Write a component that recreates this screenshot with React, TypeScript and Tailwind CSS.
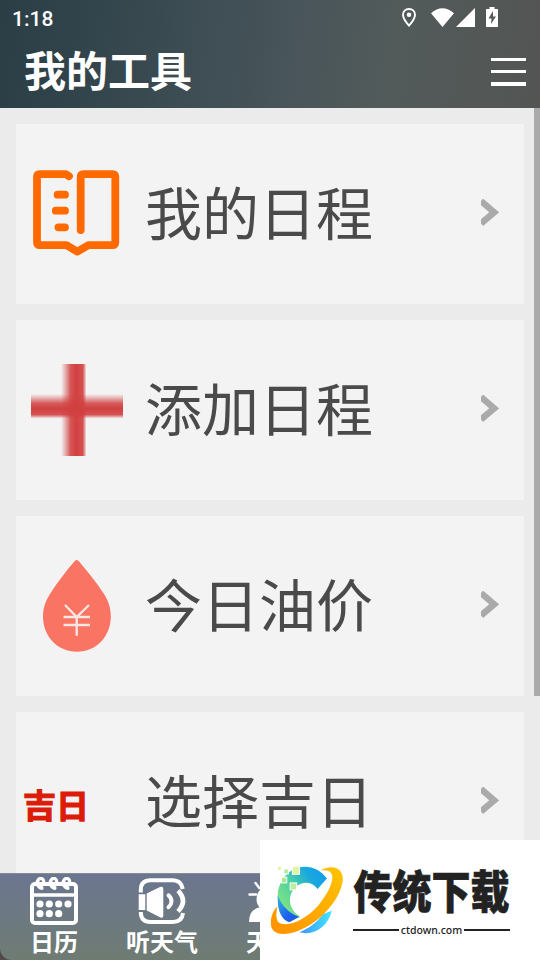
import React from 'react';

const BookIcon = () => (
    <svg viewBox="0 0 92 92" className="size-[92px]" fill="none" stroke="#ff6a00" strokeWidth="7.8" strokeLinecap="round" strokeLinejoin="round">
        <path d="M38 8.200 L35 6.200 H8.500 Q6 6.200 6 9 V74 Q6 77.200 9 77.200 H35.500 L46.300 83.600 L57.500 77.200 H81.500 Q84.300 77.200 84.300 74 V9 Q84.300 6.200 81.500 6.200 H52.500 Q49.700 6.200 49.700 9 V62" />
        <path d="M26.600 26.700 H34 M24.800 42.700 H34 M27.400 59.300 H34" />
    </svg>
);

const PlusIcon = () => (
    <svg viewBox="0 0 92 92" className="size-[92px]">
        <defs>
            <linearGradient id="plusV">
                <stop offset="0" stopColor="#d14040" stopOpacity="0" />
                <stop offset=".2" stopColor="#d14040" stopOpacity=".45" />
                <stop offset=".38" stopColor="#d14040" stopOpacity=".88" />
                <stop offset=".6" stopColor="#d14040" />
                <stop offset=".86" stopColor="#d14040" stopOpacity=".9" />
                <stop offset="1" stopColor="#d14040" stopOpacity="0" />
            </linearGradient>
            <linearGradient id="plusH" x2="0" y2="1">
                <stop offset="0" stopColor="#d14040" stopOpacity="0" />
                <stop offset=".2" stopColor="#d14040" stopOpacity=".45" />
                <stop offset=".38" stopColor="#d14040" stopOpacity=".85" />
                <stop offset=".6" stopColor="#d14040" />
                <stop offset=".84" stopColor="#d14040" stopOpacity=".9" />
                <stop offset="1" stopColor="#d14040" stopOpacity="0" />
            </linearGradient>
        </defs>
        <rect x="30" y="0" width="25.500" height="92" fill="url(#plusV)" />
        <rect x="0" y="30" width="92" height="24.500" fill="url(#plusH)" />
    </svg>
);

const OilIcon = () => (
    <svg viewBox="0 0 92 92" className="size-[92px]">
        <path d="M43.800 1 Q45.700 -.8 47.600 1 C57 12 66 23 73 34 C77.500 41 79.800 48 79.800 56.500 C79.800 76.500 65 91.800 46 91.800 C27 91.800 12 76.500 12 56.500 C12 48 14.500 41 19 34 C26 23 35 11 43.800 1 Z" fill="#f97462" />
        <path d="M34 45 L45.700 57 L58 45 M32.500 57 H59 M32.500 65 H59 M45.700 57 V75.700" fill="none" stroke="#f7e6e4" strokeWidth="2.400" />
    </svg>
);

const LuckyIcon = () => (
    <div className="ml-[-8px] pt-[3px] text-[33px] leading-[92px] font-bold text-[#dc1c08] [-webkit-text-stroke:1.2px_#dc1c08] font-['Noto_Sans_CJK_SC',sans-serif]">吉日</div>
);

const CalendarIcon = () => (
    <svg viewBox="0 0 48 48" className="size-12" fill="none" stroke="white">
        <rect x="2" y="7" width="44" height="39" rx="3" strokeWidth="4" />
        <path d="M2 18 H46" strokeWidth="3.600" />
        {[10.7, 23.7, 36.7].map((x) => (
            <g key={x}>
                <ellipse cx={x} cy="4.800" rx="3" ry="3.400" strokeWidth="3.200" />
                <path d={`M${x - 3.3} 5 Q${x - 3} 10.5 ${x + 1} 11`} strokeWidth="3.800" strokeLinecap="round" />
            </g>
        ))}
        <g fill="white" stroke="none">
            {[10, 19.3, 28.7, 38].map((x) => <circle key={x} cx={x} cy="27" r="3.600" />)}
            {[10, 19.3, 28.7].map((x) => <circle key={x} cx={x} cy="36.700" r="3.600" />)}
        </g>
    </svg>
);

const SpeakerIcon = () => (
    <svg viewBox="0 0 48 48" className="size-12" fill="none" stroke="white" strokeWidth="4">
        <path d="M2.800 15.500 V13 Q2.800 3.200 12.500 3.200 H35 Q43 3.200 44.800 12" />
        <path d="M2.800 35 Q2.800 45 12.500 45 H35 Q44 45 45 36" />
        <path d="M30.500 18.300 Q36.500 24 30.500 30.200" strokeLinecap="round" strokeWidth="4" />
        <path d="M40 13.700 Q50 24 40 34.500" strokeWidth="4.600" />
        <path d="M.7 17.200 H7.300 V33 H.7 Z M8.700 16.500 L22 10 Q25.300 8.800 25.300 12 V38.500 Q25.300 42 22 40.300 L8.700 33.500 Z" fill="white" stroke="none" />
    </svg>
);

const WeatherIcon = () => (
    <svg viewBox="0 0 48 48" className="size-12" fill="white">
        <path d="M9.500 6 L13.300 11 M3.500 17.500 H10 M24 0 V5" stroke="white" strokeWidth="2.400" strokeLinecap="round" />
        <circle cx="24" cy="22" r="13.500" />
        <path d="M3 45 Q3 32 15 30 Q20 20 32 24 Q45 28 45 45 Z" />
    </svg>
);

const SiteLogo = () => (
    <svg viewBox="45 85 225 220" className="h-[73px] w-[75px] shrink-0">
        <defs>
            <linearGradient id="logoC" x1="0" y1=".8" x2="1" y2="0">
                <stop offset="0" stopColor="#8eea78" />
                <stop offset=".45" stopColor="#45cda8" />
                <stop offset=".7" stopColor="#18a8de" />
                <stop offset="1" stopColor="#1599ee" />
            </linearGradient>
            <linearGradient id="logoRing" x1="1" y1="0" x2="0" y2="1">
                <stop offset="0" stopColor="#ffc400" />
                <stop offset="1" stopColor="#ff9100" />
            </linearGradient>
            <linearGradient id="logoBlue" x2="1" y2="1">
                <stop offset="0" stopColor="#33b5df" />
                <stop offset=".6" stopColor="#1d62ee" />
                <stop offset="1" stopColor="#2350e8" />
            </linearGradient>
            <linearGradient id="logoTail" x1="0" x2="1">
                <stop offset="0" stopColor="#3c95ff" />
                <stop offset="1" stopColor="#43e6ff" />
            </linearGradient>
        </defs>
        <path d="M216 129 C200 106 175 93 150 93 C106 94 74 128 68 172 C67 215 74 248 100 261 L136 244 C106 228 98 194 110 170 C126 138 166 130 188 160 Z" fill="url(#logoC)" />
        <path d="M68 180 C80 212 105 236 132 244 L104 260 C76 254 66 218 68 180 Z" fill="url(#logoBlue)" />
        <path d="M231 226 C218 275 178 302 133 291 C160 280 186 262 205 236 Z" fill="url(#logoTail)" />
        <path d="M196 104 C232 85 264 96 264 130 C260 190 195 262 130 286 C80 305 45 297 47 260 C48 237 58 220 67 212 C62 236 62 254 72 262 C98 276 150 255 190 210 C215 180 236 142 232 120 C228 103 213 103 196 104 Z" fill="url(#logoRing)" />
        <g stroke="white" strokeWidth="3">
            <rect x="67" y="92" width="12" height="13" fill="#e4f6a4" />
            <rect x="86" y="100" width="14" height="15" fill="#b4ec9d" />
            <rect x="112" y="92" width="21" height="24" fill="#e0f49c" />
            <rect x="79" y="125" width="16" height="17" fill="#a9e98e" />
            <rect x="105" y="142" width="20" height="21" fill="#baf09d" />
        </g>
    </svg>
);

const StatusIcons = () => (
    <svg viewBox="0 0 98 24" className="mb-1 h-6 w-[98px]" fill="white">
        <path d="M9 5 C5.400 5 3 7.600 3 10.800 C3 15 9 21.700 9 21.700 S15 15 15 10.800 C15 7.600 12.600 5 9 5 Z" fill="none" stroke="white" strokeWidth="1.900" />
        <circle cx="9" cy="10.800" r="2.300" />
        <path d="M31 9.200 Q42.300 -.8 54 9.200 L42.500 23 Z" />
        <path d="M56 23 L75 4 V23 Z" />
        <path d="M86 5 H89.500 V3 H94.500 V5 H98 V23 H86 Z" />
        <path d="M93 7 L88.500 14.500 H91.500 L91 20 L96 12.500 H93 Z" fill="#535a59" />
    </svg>
);

const Chevron = () => (
    <svg viewBox="0 0 18 27" className="mb-1 h-[27px] w-[18px]" fill="none" stroke="#aaaaaa" strokeWidth="6.4">
        <path d="M0 2 L13.200 13.300 L0 24.500" />
    </svg>
);

const tools = [
    { title: '我的日程', icon: <BookIcon /> },
    { title: '添加日程', icon: <PlusIcon /> },
    { title: '今日油价', icon: <OilIcon /> },
    { title: '选择吉日', icon: <LuckyIcon /> },
];

const tabs = [
    { label: '日历', icon: <CalendarIcon /> },
    { label: '听天气', icon: <SpeakerIcon /> },
    { label: '天气', icon: <WeatherIcon /> },
];

const App: React.FC = () => {
    return (
        <div className="relative flex h-[960px] w-[540px] flex-col overflow-hidden bg-[#ebebeb] font-['Noto_Sans_CJK_SC',sans-serif]">
            <header className="h-[108px] shrink-0 bg-linear-[98deg,#2b3d45_0%,#384a50_28%,#47545a_52%,#525b5a_72%,#535553_100%] text-white">
                <div className="flex h-9 items-center justify-between pr-[42px] pl-3">
                    <span className="pt-[2px] font-[Roboto,sans-serif] text-[21px] leading-none font-medium">1:18</span>
                    <StatusIcons />
                </div>
                <div className="flex h-[72px] items-center justify-between pr-3.5 pl-6">
                    <h1 className="pb-1.5 text-[42px] leading-[66px] font-bold">我的工具</h1>
                    <div className="flex h-7 w-[35px] flex-col justify-between">
                        <span className="h-[3px] bg-white" />
                        <span className="h-[3px] bg-white" />
                        <span className="h-1 bg-white" />
                    </div>
                </div>
            </header>

            <div className="flex min-h-0 flex-1 overflow-hidden">
                <main className="flex w-[534px] flex-col gap-4 py-4 pr-2.5 pl-4">
                    {tools.map((tool) => (
                        <div key={tool.title} className="flex h-[180px] shrink-0 items-center bg-[#f3f3f3] pr-[25px] pl-[15px]">
                            <div className="w-[92px] shrink-0">{tool.icon}</div>
                            <span className="ml-[22px] flex-1 pb-2 text-[57px] leading-[80px] text-[#4a4a4a]">{tool.title}</span>
                            <Chevron />
                        </div>
                    ))}
                </main>
                <div className="h-[588px] w-1.5 bg-[#aaaaaa]" />
            </div>

            <div className="h-[87px] shrink-0 bg-[#514c4b]">
                <nav className="flex h-full rounded-bl-xl border-t border-[#8b8b8b] bg-linear-to-b from-[#6b7690] to-[#6f7c72] text-white">
                    {tabs.map((tab) => (
                        <div key={tab.label} className="flex w-[108px] flex-col items-center pt-[3px]">
                            {tab.icon}
                            <span className="text-2xl leading-8 font-bold">{tab.label}</span>
                        </div>
                    ))}
                </nav>
            </div>

            <div className="absolute right-0 bottom-0 flex h-[120px] w-[280px] items-start bg-white pt-6 pl-2.5 text-[#222222]">
                <SiteLogo />
                <div className="ml-2 flex w-[157px] flex-col items-center pt-[3px]">
                    <div className="origin-center scale-y-[1.16] text-[39px] leading-[44px] font-black whitespace-nowrap [-webkit-text-stroke:0.6px_#222222]">传统下载</div>
                    <div className="mt-3 flex w-full items-center gap-0.5">
                        <span className="h-0.5 flex-1 bg-[#222222]" />
                        <span className="font-['Noto_Sans',sans-serif] text-[10.5px] leading-[14px] font-medium">ctdown.com</span>
                        <span className="h-0.5 flex-1 bg-[#222222]" />
                    </div>
                </div>
            </div>
        </div>
    );
};

export default App;
